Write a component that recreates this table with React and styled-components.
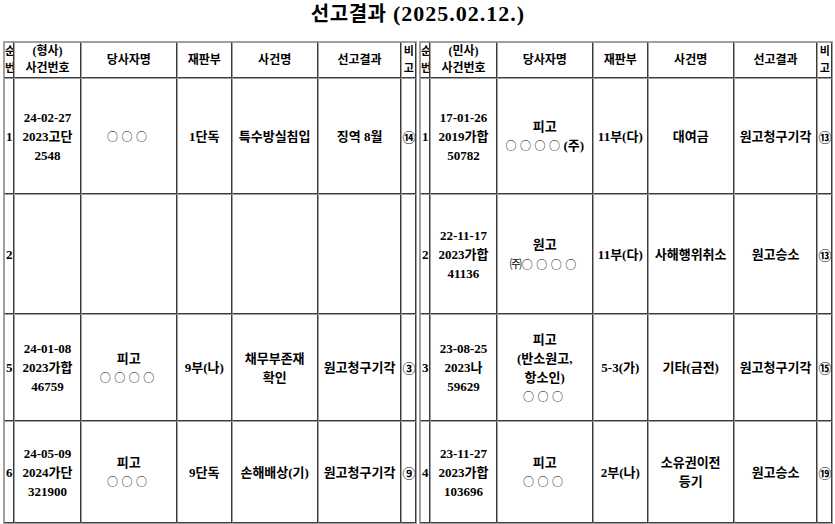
import React from 'react';
import styled, { createGlobalStyle } from 'styled-components';

const GlobalStyle = createGlobalStyle`
    body {
        margin: 0;
        background: #ffffff;
        color: #000000;
        font-family: "Liberation Serif", "Noto Sans CJK KR", serif;
    }
`

const Page = styled.div`
    width: 835px;
    padding: 0 2px 0 3px;
    box-sizing: border-box;
`

const Title = styled.h1`
    margin: 0;
    height: 41px;
    line-height: 28px;
    text-align: center;
    font-weight: 700;
    font-size: 22px;
    letter-spacing: 1px;
`

const TitleWord = styled.span`
    font-size: 20px;
    letter-spacing: 0.5px;
`

const Tables = styled.div`
    display: flex;
    gap: 2px;
`

const Table = styled.table`
    width: 414px;
    flex: none;
    table-layout: fixed;
    border-collapse: separate;
    border-spacing: 0;
    border: 1px solid #a0a0a0;
    border-bottom-width: 2px;
`

const Row = styled.tr`
    height: ${p => p.$h}px;
`

const Head = styled.th`
    padding: 0;
    border: 1px solid;
    border-color: #a0a0a0 #3c3c3c #3c3c3c #a0a0a0;
    font-size: ${p => (p.$narrow ? 11 : 12)}px;
    line-height: 17px;
    font-weight: 700;
    text-align: center;
    vertical-align: middle;
    overflow: hidden;
    white-space: nowrap;
`

const Cell = styled.td`
    padding: 0;
    border: 1px solid;
    border-color: #a0a0a0 #3c3c3c #3c3c3c #a0a0a0;
    font-size: 13px;
    line-height: 19px;
    font-weight: 700;
    text-align: center;
    vertical-align: middle;
    overflow: hidden;
    white-space: nowrap;
`

const Note = styled(Cell)`
    font-family: "Noto Sans CJK KR", sans-serif;
    font-weight: 700;
`

const Anon = styled.span`
    font-family: "Noto Sans CJK KR", sans-serif;
    font-size: 11px;
    font-weight: 400;
    letter-spacing: 3.5px;
`

const Corp = styled.span`
    font-family: "Noto Sans CJK KR", sans-serif;
    font-size: 12px;
    font-weight: 400;
`

// column widths without the 2px of cell borders
const widths = [10, 64, 93, 53, 83, 81, 14]

const heights = [116, 120, 107, 102]

const leftRows = [
    {
        no: '1',
        num: ['24-02-27', '2023고단', '2548'],
        party: [<Anon>○○○</Anon>],
        dept: ['1단독'],
        name: ['특수방실침입'],
        result: ['징역 8월'],
        note: '⑭'
    },
    { no: '2', num: [], party: [], dept: [], name: [], result: [], note: '' },
    {
        no: '5',
        num: ['24-01-08', '2023가합', '46759'],
        party: ['피고', <Anon>○○○○</Anon>],
        dept: ['9부(나)'],
        name: ['채무부존재', '확인'],
        result: ['원고청구기각'],
        note: '③'
    },
    {
        no: '6',
        num: ['24-05-09', '2024가단', '321900'],
        party: ['피고', <Anon>○○○</Anon>],
        dept: ['9단독'],
        name: ['손해배상(기)'],
        result: ['원고청구기각'],
        note: '⑨'
    }
]

const rightRows = [
    {
        no: '1',
        num: ['17-01-26', '2019가합', '50782'],
        party: ['피고', <><Anon>○○○○</Anon>(주)</>],
        dept: ['11부(다)'],
        name: ['대여금'],
        result: ['원고청구기각'],
        note: '⑬'
    },
    {
        no: '2',
        num: ['22-11-17', '2023가합', '41136'],
        party: ['원고', <><Corp>㈜</Corp><Anon>○○○○</Anon></>],
        dept: ['11부(다)'],
        name: ['사해행위취소'],
        result: ['원고승소'],
        note: '⑬'
    },
    {
        no: '3',
        num: ['23-08-25', '2023나', '59629'],
        party: ['피고', '(반소원고,', '항소인)', <Anon>○○○</Anon>],
        dept: ['5-3(가)'],
        name: ['기타(금전)'],
        result: ['원고청구기각'],
        note: '⑮'
    },
    {
        no: '4',
        num: ['23-11-27', '2023가합', '103696'],
        party: ['피고', <Anon>○○○</Anon>],
        dept: ['2부(나)'],
        name: ['소유권이전', '등기'],
        result: ['원고승소'],
        note: '⑲'
    }
]

const Lines = ({ items }) =>
    items.map((item, i) => (
        <React.Fragment key={i}>
            {i > 0 && <br />}
            {item}
        </React.Fragment>
    ))

const CaseTable = ({ kind, rows }) => (
    <Table>
        <colgroup>
            {widths.map((w, i) => (
                <col key={i} style={{ width: w }} />
            ))}
        </colgroup>
        <thead>
            <Row $h={34}>
                <Head $narrow>순<br />번</Head>
                <Head>({kind})<br />사건번호</Head>
                <Head>당사자명</Head>
                <Head>재판부</Head>
                <Head>사건명</Head>
                <Head>선고결과</Head>
                <Head $narrow>비<br />고</Head>
            </Row>
        </thead>
        <tbody>
            {rows.map((r, i) => (
                <Row key={i} $h={heights[i]}>
                    <Cell>{r.no}</Cell>
                    <Cell><Lines items={r.num} /></Cell>
                    <Cell><Lines items={r.party} /></Cell>
                    <Cell><Lines items={r.dept} /></Cell>
                    <Cell><Lines items={r.name} /></Cell>
                    <Cell><Lines items={r.result} /></Cell>
                    <Note>{r.note}</Note>
                </Row>
            ))}
        </tbody>
    </Table>
)

const App = () => {
    return (
        <Page>
            <GlobalStyle />
            <Title>
                <TitleWord>선고결과</TitleWord> (2025.02.12.)
            </Title>
            <Tables>
                <CaseTable kind="형사" rows={leftRows} />
                <CaseTable kind="민사" rows={rightRows} />
            </Tables>
        </Page>
    );
};

export default App;
